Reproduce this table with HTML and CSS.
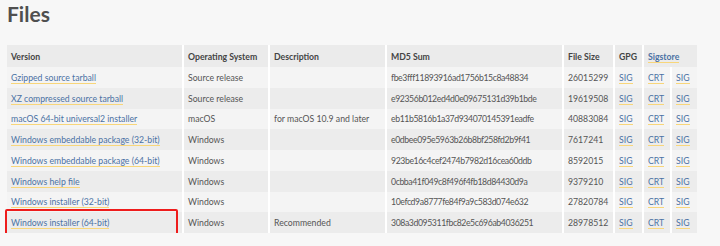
FILE: index.html
```html
<!DOCTYPE html>
<html lang="en">
<head>
  <meta charset="UTF-8">
  <title>Files</title>
  <link rel="stylesheet" href="styles.css">
</head>
<body>
  <h1 class="titulo">Files</h1>

  <div class="tabela-wrap">
    <table class="arquivos">
      <colgroup>
        <col class="c-versao">
        <col class="c-so">
        <col class="c-desc">
        <col class="c-md5">
        <col class="c-tam">
        <col class="c-gpg">
        <col class="c-crt">
        <col class="c-sig">
      </colgroup>
      <thead>
        <tr>
          <th>Version</th>
          <th>Operating System</th>
          <th>Description</th>
          <th>MD5 Sum</th>
          <th>File Size</th>
          <th>GPG</th>
          <th colspan="2"><a href="#">Sigstore</a></th>
        </tr>
      </thead>
      <tbody>
        <tr>
          <td><a href="#">Gzipped source tarball</a></td>
          <td>Source release</td>
          <td></td>
          <td class="md5">fbe3fff11893916ad1756b15c8a48834</td>
          <td>26015299</td>
          <td><a href="#">SIG</a></td>
          <td><a href="#">CRT</a></td>
          <td><a href="#">SIG</a></td>
        </tr>
        <tr>
          <td><a href="#">XZ compressed source tarball</a></td>
          <td>Source release</td>
          <td></td>
          <td class="md5">e92356b012ed4d0e09675131d39b1bde</td>
          <td>19619508</td>
          <td><a href="#">SIG</a></td>
          <td><a href="#">CRT</a></td>
          <td><a href="#">SIG</a></td>
        </tr>
        <tr>
          <td><a href="#">macOS 64-bit universal2 installer</a></td>
          <td>macOS</td>
          <td>for macOS 10.9 and later</td>
          <td class="md5">eb11b5816b1a37d934070145391eadfe</td>
          <td>40883084</td>
          <td><a href="#">SIG</a></td>
          <td><a href="#">CRT</a></td>
          <td><a href="#">SIG</a></td>
        </tr>
        <tr>
          <td><a href="#">Windows embeddable package (32-bit)</a></td>
          <td>Windows</td>
          <td></td>
          <td class="md5">e0dbee095e5963b26b8bf258fd2b9f41</td>
          <td>7617241</td>
          <td><a href="#">SIG</a></td>
          <td><a href="#">CRT</a></td>
          <td><a href="#">SIG</a></td>
        </tr>
        <tr>
          <td><a href="#">Windows embeddable package (64-bit)</a></td>
          <td>Windows</td>
          <td></td>
          <td class="md5">923be16c4cef2474b7982d16cea60ddb</td>
          <td>8592015</td>
          <td><a href="#">SIG</a></td>
          <td><a href="#">CRT</a></td>
          <td><a href="#">SIG</a></td>
        </tr>
        <tr>
          <td><a href="#">Windows help file</a></td>
          <td>Windows</td>
          <td></td>
          <td class="md5">0cbba41f049c8f496f4fb18d84430d9a</td>
          <td>9379210</td>
          <td><a href="#">SIG</a></td>
          <td><a href="#">CRT</a></td>
          <td><a href="#">SIG</a></td>
        </tr>
        <tr>
          <td><a href="#">Windows installer (32-bit)</a></td>
          <td>Windows</td>
          <td></td>
          <td class="md5">10efcd9a8777fe84f9a9c583d074e632</td>
          <td>27820784</td>
          <td><a href="#">SIG</a></td>
          <td><a href="#">CRT</a></td>
          <td><a href="#">SIG</a></td>
        </tr>
        <tr>
          <td><a href="#">Windows installer (64-bit)</a></td>
          <td>Windows</td>
          <td>Recommended</td>
          <td class="md5">308a3d095311fbc82e5c696ab4036251</td>
          <td>28978512</td>
          <td><a href="#">SIG</a></td>
          <td><a href="#">CRT</a></td>
          <td><a href="#">SIG</a></td>
        </tr>
      </tbody>
    </table>
    <!-- destaque vermelho na linha recomendada -->
    <span class="destaque"></span>
  </div>
</body>
</html>
```

FILE: styles.css
```css
body {
  margin: 0;
  padding: 0 7px;
  background-color: #f7f7f7;
  font-family: Lato, "Liberation Sans", sans-serif;
  color: #555;
}

.titulo {
  margin: 0;
  padding-top: 1px;
  height: 45px;
  box-sizing: border-box;
  font-size: 21px;
  line-height: 25px;
  font-weight: bold;
  color: #4f4f4f;
}

.tabela-wrap {
  position: relative;
  width: 690px;
}

.arquivos {
  border-collapse: collapse;
  width: 690px;
  table-layout: fixed;
  font-size: 8.7px;
}

.c-versao { width: 176px; }
.c-so { width: 86px; }
.c-desc { width: 117px; }
.c-md5 { width: 177px; }
.c-tam { width: 51px; }
.c-gpg { width: 29px; }
.c-crt { width: 28px; }
.c-sig { width: 26px; }

.arquivos th,
.arquivos td {
  padding: 0 4px;
  text-align: left;
  white-space: nowrap;
  border-right: 2px solid #fff;
}

.arquivos th:last-child,
.arquivos td:last-child {
  border-right: none;
}

.arquivos thead tr {
  height: 22px;
}

.arquivos tbody tr {
  height: 20.75px;
}

.arquivos th {
  background-color: #ebebeb;
  font-weight: bold;
  color: #444;
}

.arquivos tbody tr:nth-child(odd) {
  background-color: #f4f4f4;
}

.arquivos tbody tr:nth-child(even) {
  background-color: #ececec;
}

.md5 {
  letter-spacing: -0.4px;
}

.arquivos a {
  color: #4b72a4;
  text-decoration: none;
  border-bottom: 1px solid #f8d67a;
}

.destaque {
  position: absolute;
  left: -2px;
  bottom: -4px;
  width: 173px;
  height: 28px;
  box-sizing: border-box;
  border: 2px solid #ee1c1c;
  border-radius: 2px;
  pointer-events: none;
}
```
